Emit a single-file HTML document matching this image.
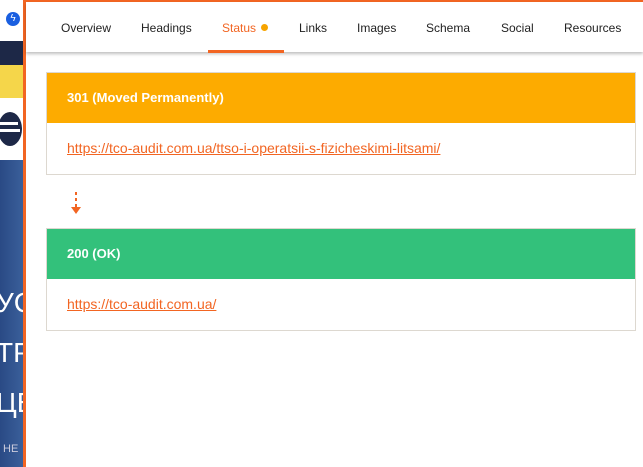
<!DOCTYPE html>
<html><head><style>
body{margin:0;width:643px;height:467px;overflow:hidden;font-family:"Liberation Sans",Arial,sans-serif;position:relative;background:#fff}
.strip{position:absolute;left:0;top:0;width:23px;height:467px;overflow:hidden;background:linear-gradient(90deg,#2a4a85,#3a5f9a)}
.panel{position:absolute;left:23px;top:0;width:620px;height:467px;background:#fff;border-left:3px solid #f26522;border-top:2px solid #f26522;box-sizing:border-box}
.nav{height:50px;box-shadow:0 2px 3px rgba(0,0,0,.25);position:relative}
.nav span{position:absolute;top:19px;font-size:12px;color:#222}
.box{position:absolute;left:20px;width:590px;border:1px solid #ddd8d0;box-sizing:border-box}
.hd{height:50px;color:#fff;font-weight:bold;font-size:13px;line-height:50px;padding-left:20px}
.bd{height:51px;line-height:51px;padding-left:20px;font-size:14px}
.bd a{color:#f26522;text-decoration:underline}
</style></head><body>
<div class="strip">
<div style="position:absolute;top:0;left:0;width:23px;height:41px;background:#fff"></div>
<div style="position:absolute;top:12px;left:6px;width:14px;height:14px;border-radius:50%;background:#1a5fe0;color:#fff;font-size:10px;line-height:14px;text-align:center">ϟ</div>
<div style="position:absolute;top:41px;left:0;width:23px;height:24px;background:#1d2847"></div>
<div style="position:absolute;top:65px;left:0;width:23px;height:33px;background:#f5d64a"></div>
<div style="position:absolute;top:98px;left:0;width:23px;height:62px;background:#fff"></div>
<div style="position:absolute;top:112px;left:-2px;width:24px;height:34px;border-radius:50%;background:#1d2847"></div>
<div style="position:absolute;top:122px;left:0;width:18px;height:3px;background:#fff"></div>
<div style="position:absolute;top:129px;left:0;width:20px;height:3px;background:#fff"></div>
<div style="position:absolute;top:288px;left:-4px;color:#fff;font-size:28px;line-height:30px">УС</div>
<div style="position:absolute;top:338px;left:-4px;color:#fff;font-size:28px;line-height:30px">ТР</div>
<div style="position:absolute;top:388px;left:-4px;color:#fff;font-size:28px;line-height:30px">ЦЕ</div>
<div style="position:absolute;top:443px;left:3px;color:#ccd;font-size:11px">НЕ</div>
</div>
<div class="panel">
<div class="nav">
<span style="left:35px">Overview</span>
<span style="left:115px">Headings</span>
<span style="left:196px;color:#f26522">Status <b style="display:inline-block;width:7px;height:7px;border-radius:50%;background:#f7a400;vertical-align:1px;margin-left:2px"></b></span>
<div style="position:absolute;left:182px;top:48px;width:76px;height:3px;background:#f26522"></div>
<span style="left:273px">Links</span>
<span style="left:331px">Images</span>
<span style="left:400px">Schema</span>
<span style="left:475px">Social</span>
<span style="left:538px">Resources</span>
</div>
<div class="box" style="top:70px"><div class="hd" style="background:#fdab00">301 (Moved Permanently)</div><div class="bd"><a>https://tco-audit.com.ua/ttso-i-operatsii-s-fizicheskimi-litsami/</a></div></div>
<svg style="position:absolute;left:44px;top:188px" width="12" height="26"><line x1="6" y1="2" x2="6" y2="18" stroke="#f26522" stroke-width="2" stroke-dasharray="3,3"/><path d="M1 17 L11 17 L6 24Z" fill="#f26522"/></svg>
<div class="box" style="top:226px"><div class="hd" style="background:#33c17b">200 (OK)</div><div class="bd"><a>https://tco-audit.com.ua/</a></div></div>
</div>
</body></html>
